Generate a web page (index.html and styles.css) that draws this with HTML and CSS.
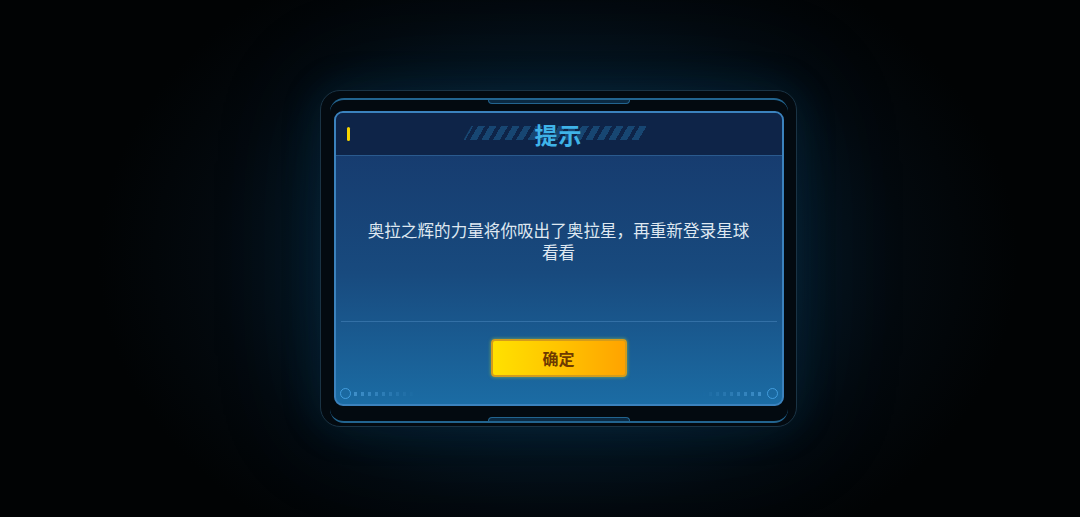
FILE: index.html
```html
<!DOCTYPE html>
<html lang="zh-CN">
<head>
    <meta charset="UTF-8">
    <meta name="viewport" content="width=device-width, initial-scale=1.0">
    <title>提示</title>
    <link rel="stylesheet" href="styles.css">
</head>

<body>
    <div class="stage">
        <div class="frame">
            <div class="rim rim-top"><span class="tab"></span></div>
            <div class="panel">
                <header class="panel-head">
                    <span class="mark"></span>
                    <div class="title">
                        <span class="stripes"></span>
                        <h1>提示</h1>
                    </div>
                </header>
                <div class="panel-body">
                    <p class="message">奥拉之辉的力量将你吸出了奥拉星，再重新登录星球看看</p>
                </div>
                <div class="panel-foot">
                    <button class="ok">确定</button>
                    <div class="ornaments">
                        <span class="orn orn-left"><i class="ring"></i><i class="dots"></i></span>
                        <span class="orn orn-right"><i class="dots"></i><i class="ring"></i></span>
                    </div>
                </div>
            </div>
            <div class="rim rim-bottom"><span class="tab"></span></div>
        </div>
    </div>
</body>

</html>
```

FILE: styles.css
```css
* {
    box-sizing: border-box;
}

html, body {
    margin: 0;
    height: 100%;
}

body {
    background: radial-gradient(ellipse 460px 340px at 558px 258px, #08202f 0%, #061826 40%, #03090e 75%, #010304 100%);
    font-family: "Noto Sans CJK SC", "Noto Sans", sans-serif;
    overflow: hidden;
}

.stage {
    height: 517px;
    display: flex;
    align-items: center;
    justify-content: center;
    padding-left: 37px;
}

.frame {
    width: 477px;
    height: 337px;
    border: 1px solid #1a3344;
    border-radius: 20px;
    background: #030a10;
    box-shadow: 0 0 40px rgba(14, 90, 140, 0.18), 0 0 110px rgba(10, 70, 110, 0.18);
    display: flex;
    flex-direction: column;
    align-items: center;
    padding: 6px 9px;
}

.rim {
    width: 458px;
    height: 14px;
    flex: none;
    display: flex;
    justify-content: center;
}

.rim-top {
    border-top: 2px solid #22648f;
    border-radius: 14px 14px 0 0;
    margin-top: 1px;
}

.rim-top .tab {
    width: 142px;
    height: 4px;
    background: #0b2a42;
    border: 1px solid #22648f;
    border-top: none;
    border-radius: 0 0 6px 6px;
}

.rim-bottom {
    border-bottom: 2px solid #22648f;
    border-radius: 0 0 14px 14px;
    align-items: flex-end;
    margin-top: 3px;
}

.rim-bottom .tab {
    width: 142px;
    height: 4px;
    background: #0b2a42;
    border: 1px solid #22648f;
    border-bottom: none;
    border-radius: 6px 6px 0 0;
}

.panel {
    width: 450px;
    height: 295px;
    flex: none;
    margin-top: -1px;
    border: 2px solid #3b82bd;
    border-radius: 9px;
    overflow: hidden;
    display: flex;
    flex-direction: column;
    background: linear-gradient(180deg, #16376a 0%, #184a7e 55%, #1b6ca4 100%);
}

.panel-head {
    height: 43px;
    flex: none;
    background: #0e2448;
    border-bottom: 1px solid #2a5a8e;
    display: flex;
    align-items: center;
    padding-left: 11px;
}

.mark {
    width: 3px;
    height: 14px;
    border-radius: 2px;
    background: #f6d400;
}

.title {
    flex: 1;
    display: flex;
    justify-content: center;
    align-items: center;
    margin-left: -11px;
    margin-right: 3px;
    position: relative;
    height: 100%;
}

.stripes {
    position: absolute;
    left: 50%;
    top: 13px;
    width: 186px;
    height: 14px;
    margin-left: -95px;
    clip-path: polygon(8px 0, 100% 0, calc(100% - 8px) 100%, 0 100%);
    background: repeating-linear-gradient(-60deg, #174672 0 6px, transparent 6px 10px);
}

.title h1 {
    position: relative;
    margin: 0;
    font-size: 23px;
    font-weight: 700;
    letter-spacing: 1px;
    color: #3fb3e8;
    padding: 0 6px;
}

.panel-body {
    flex: 1;
    display: flex;
    align-items: center;
    justify-content: center;
    margin: 0 5px;
    border-bottom: 1px solid #3370a6;
    padding-top: 4px;
}

.message {
    margin: 0;
    max-width: 390px;
    text-align: center;
    font-size: 16.6px;
    line-height: 22px;
    color: #dfe8f1;
}

.panel-foot {
    height: 82px;
    flex: none;
    display: flex;
    flex-direction: column;
    align-items: center;
    padding-top: 17px;
}

.ok {
    width: 136px;
    height: 38px;
    border: 2px solid #d39c1c;
    border-radius: 4px;
    background: linear-gradient(90deg, #ffe100 0%, #ffc400 50%, #ffa300 100%);
    box-shadow: 0 0 3px 1px rgba(120, 170, 90, 0.6);
    color: #6e3a00;
    font-family: "Noto Sans CJK SC", sans-serif;
    font-size: 16px;
    font-weight: 700;
    padding: 0;
}

.ornaments {
    align-self: stretch;
    display: flex;
    justify-content: space-between;
    padding: 0 4px;
    margin-top: 11px;
}

.orn {
    display: flex;
    align-items: center;
    gap: 3px;
}

.ring {
    width: 11px;
    height: 11px;
    border: 1.5px solid #4aa6e6;
    border-radius: 50%;
    opacity: 0.85;
}

.dots {
    width: 62px;
    height: 4px;
    background: repeating-linear-gradient(90deg, #3f8fc9 0 3px, transparent 3px 7px);
}

.orn-left .dots {
    -webkit-mask-image: linear-gradient(90deg, #000, transparent);
    mask-image: linear-gradient(90deg, #000, transparent);
}

.orn-right .dots {
    -webkit-mask-image: linear-gradient(270deg, #000, transparent);
    mask-image: linear-gradient(270deg, #000, transparent);
}
```
